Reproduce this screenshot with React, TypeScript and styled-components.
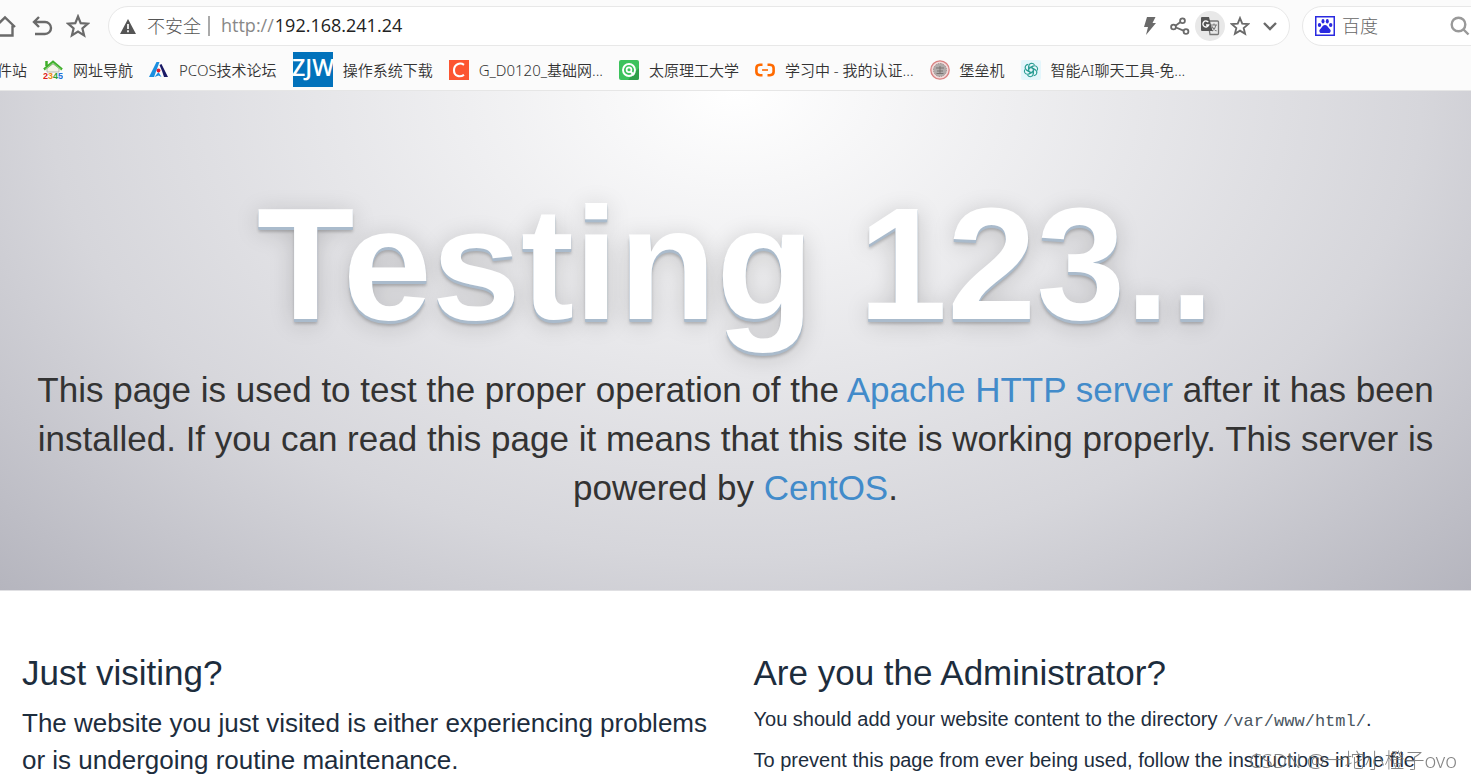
import React from "react";
import styled, { createGlobalStyle } from "styled-components";

const sans = `"Liberation Sans", Arial, Helvetica, sans-serif`;
const ui = `"Open Sans", "Noto Sans CJK SC", sans-serif`;
const uiWide = `"Noto Sans", "Noto Sans CJK SC", sans-serif`;

const GlobalStyle = createGlobalStyle`
  * { box-sizing: border-box; }
  html { overflow: hidden; }
  body { margin: 0; background: #fff; color: #1d2d3d; font-family: ${sans}; }
  a { color: #428bca; text-decoration: none; }
  h1, h2, p { margin: 0; }
`;

const Chrome = styled.header`
  background: #fbfbfb;
  border-bottom: 1px solid #e6e6e6;
  font-family: ${ui};
  overflow: hidden;
`;

const Toolbar = styled.div`
  display: flex;
  align-items: center;
  padding-top: 6px;
`;

const IconButton = styled.button<{ $active?: boolean }>`
  display: flex;
  align-items: center;
  justify-content: center;
  flex: none;
  width: 30px;
  height: 30px;
  padding: 0;
  border: 0;
  border-radius: 50%;
  background: ${(p) => (p.$active ? "#e8e8e8" : "transparent")};
  color: #6a6a6a;
`;

const NavButtons = styled.nav`
  display: flex;
  flex: none;
  gap: 6px;
  margin-left: -9px;
  margin-right: 15px;
`;

const Pill = styled.div`
  display: flex;
  align-items: center;
  height: 40px;
  border: 1px solid #e8e8e8;
  border-radius: 20px;
  background: #fff;
`;

const AddressBar = styled(Pill)`
  flex: 1;
  min-width: 0;
  padding: 0 4px 0 11px;
`;

const Security = styled.span`
  display: flex;
  align-items: center;
  gap: 11px;
  flex: none;
  font-size: 18px;
  font-weight: 300;
  line-height: 24px;
  color: #555;
`;

const Divider = styled.span`
  width: 2px;
  height: 20px;
  margin: 0 11px 0 7px;
  background: #aaa;
`;

const Url = styled.div`
  flex: 1;
  padding-bottom: 2px;
  font-size: 18px;
  line-height: 24px;
  color: #222;
  span { margin-right: 1px; color: #888; }
`;

const SearchBar = styled(Pill)`
  flex: none;
  width: 190px;
  margin: 0 -21px 0 12px;
  padding-left: 12px;
  gap: 7px;
`;

const SearchInput = styled.input`
  width: 101px;
  padding: 0;
  border: 0;
  outline: 0;
  background: transparent;
  font-family: ${ui};
  font-size: 18px;
  font-weight: 300;
  color: #666;
  &::placeholder { color: #666; opacity: 1; }
`;

const Bookmarks = styled.nav`
  display: flex;
  align-items: center;
  gap: 16px;
  height: 44px;
  padding-top: 3px;
  margin-left: -3px;
`;

const Bookmark = styled.a`
  display: flex;
  align-items: center;
  flex: none;
  gap: 10px;
  font-family: ${uiWide};
  font-size: 15px;
  font-weight: 350;
  line-height: 20px;
  color: #333;
  white-space: nowrap;
  svg { flex: none; }
`;

const Hero = styled.section`
  padding: 85px 30px 78px;
  border-bottom: 1px solid #e0e0e3;
  text-align: center;
  background: radial-gradient(ellipse farthest-corner at center top, #fff 0%, #d6d6db 66%, #b5b5be 100%);
`;

const Title = styled.h1`
  margin-bottom: 13px;
  font-size: 160px;
  font-weight: 700;
  line-height: 176px;
  color: #fff;
  text-shadow: 0 1px 0 #abc, 0 2px 0 #abc, 0 3px 0 #abc, 0 5px 3px rgba(0, 0, 0, 0.2), 0 4px 24px rgba(0, 0, 0, 0.18);
`;

const Lead = styled.p`
  font-size: 35px;
  line-height: 49px;
  color: #333;
`;

const Columns = styled.main`
  display: grid;
  grid-template-columns: 1fr 1fr;
  padding: 62px 4px 0;
`;

const Column = styled.section`
  padding: 0 18px;
`;

const Heading = styled.h2`
  margin-bottom: 13px;
  font-size: 35px;
  font-weight: 400;
  line-height: 39px;
`;

const Large = styled.p`
  font-size: 26px;
  line-height: 37px;
`;

const Text = styled.p`
  margin-bottom: 12px;
  font-size: 20px;
  line-height: 29px;
`;

const Code = styled.code`
  font-family: "Liberation Mono", monospace;
  font-size: 17px;
  line-height: 17px;
  color: #4a5560;
`;

const Watermark = styled.div`
  position: fixed;
  right: 14px;
  bottom: 6px;
  font-family: ${uiWide};
  font-size: 20px;
  font-weight: 300;
  line-height: 26px;
  color: rgba(120, 120, 120, 0.9);
`;

const HomeIcon = () => (
  <svg width="24" height="24" viewBox="0 0 24 24" fill="none" stroke="currentColor" strokeWidth="2.4">
    <path d="M1 13 11 3.500l10 9.500M4 11.500v10h14.500v-10" />
  </svg>
);
const UndoIcon = () => (
  <svg width="24" height="24" viewBox="0 0 24 24" fill="none" stroke="currentColor" strokeWidth="2.4">
    <path d="M9 3 4 8l5 5M4 8h11a6 6 0 0 1 0 12H5" />
  </svg>
);
const StarIcon = ({ size = 24 }: { size?: number }) => (
  <svg width={size} height={size} viewBox="0 0 24 24" fill="none" stroke="currentColor" strokeWidth="2.2">
    <path d="m12 2.500 2.700 6.700 7.200.5-5.500 4.700 1.700 7-6.100-3.800-6.100 3.800 1.700-7-5.500-4.700 7.200-.5z" />
  </svg>
);
const WarningIcon = () => (
  <svg width="16" height="15" viewBox="0 0 16 15">
    <path d="M8 0 16 15H0z" fill="#555" />
    <path d="M8 5v5M8 11.300v2" stroke="#fff" strokeWidth="1.700" />
  </svg>
);
const BoltIcon = () => (
  <svg width="14" height="20" viewBox="0 0 14 20" fill="currentColor">
    <path d="M4 1h8.500L9.500 7H13L3 19l2-8H1z" />
  </svg>
);
const ShareIcon = () => (
  <svg width="20" height="18" viewBox="0 0 20 18" fill="none" stroke="currentColor" strokeWidth="1.8">
    <circle cx="3.500" cy="10" r="2.400" />
    <circle cx="12.500" cy="3.700" r="2.400" />
    <circle cx="16" cy="14.500" r="2.400" />
    <path d="m5.500 8.700 5-3.600M6 10.500l7.500 3.200" />
  </svg>
);
const TranslateIcon = () => (
  <svg width="20" height="20" viewBox="0 0 20 20" fill="none">
    <path d="M8 5h9.500a1 1 0 0 1 1 1v11.500a1 1 0 0 1-1 1H10z" stroke="#777" strokeWidth="1.300" />
    <path d="M11 9h6M14 7.500V9M16 9c-.5 3-2.500 5-4 6M12 10.500c1 2.500 2.500 3.500 4.500 4.500" stroke="#777" strokeWidth="1.100" />
    <path d="M2 1h7l3.500 14H2a1 1 0 0 1-1-1V2a1 1 0 0 1 1-1z" fill="#555" />
    <path d="M8.300 6.200A3 3 0 1 0 8.700 9H6" stroke="#fff" strokeWidth="1.300" />
  </svg>
);
const ChevronIcon = () => (
  <svg width="14" height="10" viewBox="0 0 14 10" fill="none" stroke="currentColor" strokeWidth="2.400">
    <path d="m1 2 6 6 6-6" />
  </svg>
);
const PawIcon = () => (
  <svg width="20" height="20" viewBox="0 0 20 20">
    <rect x=".75" y=".75" width="18.500" height="18.500" fill="#fff" stroke="#2a2ae0" strokeWidth="1.500" />
    <g fill="#2a2ae0">
      <ellipse cx="4.500" cy="9" rx="1.700" ry="2.100" />
      <ellipse cx="8" cy="5.300" rx="1.500" ry="2.200" />
      <ellipse cx="12.300" cy="5.300" rx="1.500" ry="2.200" />
      <ellipse cx="15.700" cy="9" rx="1.700" ry="2.100" />
      <path d="M10 9c2 0 2.500 1.800 4 3.200s2 2.200 1.500 3.500c-.8 2-3 1.300-5.500 1.300s-4.700.7-5.500-1.300C4 14.400 4.600 13.600 6 12.200S8 9 10 9z" />
    </g>
  </svg>
);
const SearchIcon = () => (
  <svg width="20" height="20" viewBox="0 0 20 20" fill="none" stroke="#999" strokeWidth="2.400">
    <circle cx="8.500" cy="8.500" r="6.800" />
    <path d="m13.500 13.500 5 5" />
  </svg>
);

const NavSiteIcon = () => (
  <svg width="20" height="20" viewBox="0 0 20 20" fontFamily="Liberation Sans" fontWeight="700" fontSize="9">
    <path d="M4 8v4h12V8l-6-4z" fill="#f4f4e8" stroke="#a9a9a0" strokeWidth=".8" />
    <path d="M1 9.500 10 2l9 7.500M3.500 1v5" fill="none" stroke="#3fae2a" strokeWidth="2.500" />
    <path d="m2 9.500 8-6.500 8 6.500" fill="none" stroke="#a5dd98" strokeWidth=".8" />
    <text y="19" x="0" fill="#e02020">2</text>
    <text y="19" x="5" fill="#f08a10">3</text>
    <text y="19" x="10" fill="#30a030">4</text>
    <text y="19" x="15" fill="#2070d8">5</text>
  </svg>
);
const PcosIcon = () => (
  <svg width="20" height="20" viewBox="0 0 20 20">
    <path d="M0 17 7.500 2h3L5 17z" fill="#1b8fe0" />
    <path d="m10.500 5 2-1 6.500 13h-4l-2-6z" fill="#1a1a66" />
    <path d="m5.500 17 4-5 3 5-3-1.500z" fill="#1b8fe0" />
    <circle cx="9.500" cy="10.500" r="1.900" fill="#e02030" />
  </svg>
);
const ZjwIcon = () => (
  <svg width="40" height="35" viewBox="0 0 40 35">
    <rect width="40" height="35" fill="#0272bb" />
    <text x="20" y="24" textAnchor="middle" fill="#fff" fontFamily="Open Sans" fontSize="23" fontWeight="600">ZJW</text>
  </svg>
);
const CsdnIcon = () => (
  <svg width="20" height="20" viewBox="0 0 20 20">
    <rect width="20" height="20" fill="#fc5531" />
    <path d="M15 4.800C11 2 5 4.200 5 10.200c0 5.800 5.500 7.600 10 4.600" fill="none" stroke="#fff" strokeWidth="2.100" />
  </svg>
);
const CampusIcon = () => (
  <svg width="20" height="20" viewBox="0 0 20 20">
    <rect width="20" height="20" rx="2" fill="#3cc25c" />
    <path d="m14 14 6-6v10a2 2 0 0 1-2 2H9z" fill="#2f9f4a" />
    <circle cx="10" cy="10" r="6" fill="none" stroke="#fff" strokeWidth="1.900" />
    <circle cx="10" cy="9.800" r="2.400" fill="none" stroke="#fff" strokeWidth="1.700" />
    <path d="m11.500 11.500 3.500 3.500" stroke="#fff" strokeWidth="1.900" />
  </svg>
);
const CloudIcon = () => (
  <svg width="20" height="20" viewBox="0 0 20 20" fill="none" stroke="#ff6a00" strokeWidth="2.600">
    <path d="M7.500 4.800H5Q1.400 5 1.400 8v4q0 3 3.600 3.200h2.500M12.500 4.800H15q3.600.2 3.600 3.200v4q0 3-3.600 3.200h-2.500" />
    <path d="M7 10h6" strokeWidth="1.600" />
  </svg>
);
const SealIcon = () => (
  <svg width="20" height="20" viewBox="0 0 20 20" fill="none">
    <circle cx="10" cy="10" r="9.200" fill="#f2dada" stroke="#d98282" strokeWidth="1.300" />
    <circle cx="10" cy="10" r="6.500" fill="#b0abaa" stroke="#9a8d8b" strokeDasharray="1.500 1" />
    <path d="M6 8h8M7 11h6M6.500 13.500h7M10 6v8" stroke="#7a7270" />
  </svg>
);
const KnotIcon = () => (
  <svg width="20" height="20" viewBox="0 0 20 20" fill="none" stroke="#2a9d94" strokeWidth="1.100">
    <rect width="20" height="20" rx="2" fill="#e4f6fc" stroke="none" />
    {[0, 60, 120, 180, 240, 300].map((a) => (
      <path key={a} transform={`rotate(${a} 10 10)`} d="M7.700 12V6.200q.3-2.700 3-2.900 1.700 0 2.800 1.500M7.700 8.600l4.600-2.500" />
    ))}
  </svg>
);

const bookmarks: { label: string; icon?: React.ReactNode }[] = [
  { label: "件站" },
  { label: "网址导航", icon: <NavSiteIcon /> },
  { label: "PCOS技术论坛", icon: <PcosIcon /> },
  { label: "操作系统下载", icon: <ZjwIcon /> },
  { label: "G_D0120_基础网...", icon: <CsdnIcon /> },
  { label: "太原理工大学", icon: <CampusIcon /> },
  { label: "学习中 - 我的认证...", icon: <CloudIcon /> },
  { label: "堡垒机", icon: <SealIcon /> },
  { label: "智能AI聊天工具-免...", icon: <KnotIcon /> },
];

export default function App() {
  return (
    <>
      <GlobalStyle />
      <Chrome>
        <Toolbar>
          <NavButtons>
            <IconButton aria-label="Home"><HomeIcon /></IconButton>
            <IconButton aria-label="Back"><UndoIcon /></IconButton>
            <IconButton aria-label="Favourites"><StarIcon /></IconButton>
          </NavButtons>
          <AddressBar>
            <Security><WarningIcon />不安全</Security>
            <Divider />
            <Url><span>http://</span>192.168.241.24</Url>
            <IconButton aria-label="Speed"><BoltIcon /></IconButton>
            <IconButton aria-label="Share"><ShareIcon /></IconButton>
            <IconButton aria-label="Translate" $active><TranslateIcon /></IconButton>
            <IconButton aria-label="Bookmark"><StarIcon size={20} /></IconButton>
            <IconButton aria-label="More"><ChevronIcon /></IconButton>
          </AddressBar>
          <SearchBar>
            <PawIcon />
            <SearchInput aria-label="Search" placeholder="百度" />
            <SearchIcon />
          </SearchBar>
        </Toolbar>
        <Bookmarks>
          {bookmarks.map((b) => (
            <Bookmark key={b.label} href="#">{b.icon}{b.label}</Bookmark>
          ))}
        </Bookmarks>
      </Chrome>
      <Hero>
        <Title>Testing 123..</Title>
        <Lead>
          This page is used to test the proper operation of the <a href="#">Apache HTTP server</a> after it has been
          installed. If you can read this page it means that this site is working properly. This server is powered
          by <a href="#">CentOS</a>.
        </Lead>
      </Hero>
      <Columns>
        <Column>
          <Heading>Just visiting?</Heading>
          <Large>The website you just visited is either experiencing problems or is undergoing routine maintenance.</Large>
        </Column>
        <Column>
          <Heading>Are you the Administrator?</Heading>
          <Text>You should add your website content to the directory <Code>/var/www/html/</Code>.</Text>
          <Text>To prevent this page from ever being used, follow the instructions in the file</Text>
        </Column>
      </Columns>
      <Watermark>CSDN @一坨小橙子ovo</Watermark>
    </>
  );
}
